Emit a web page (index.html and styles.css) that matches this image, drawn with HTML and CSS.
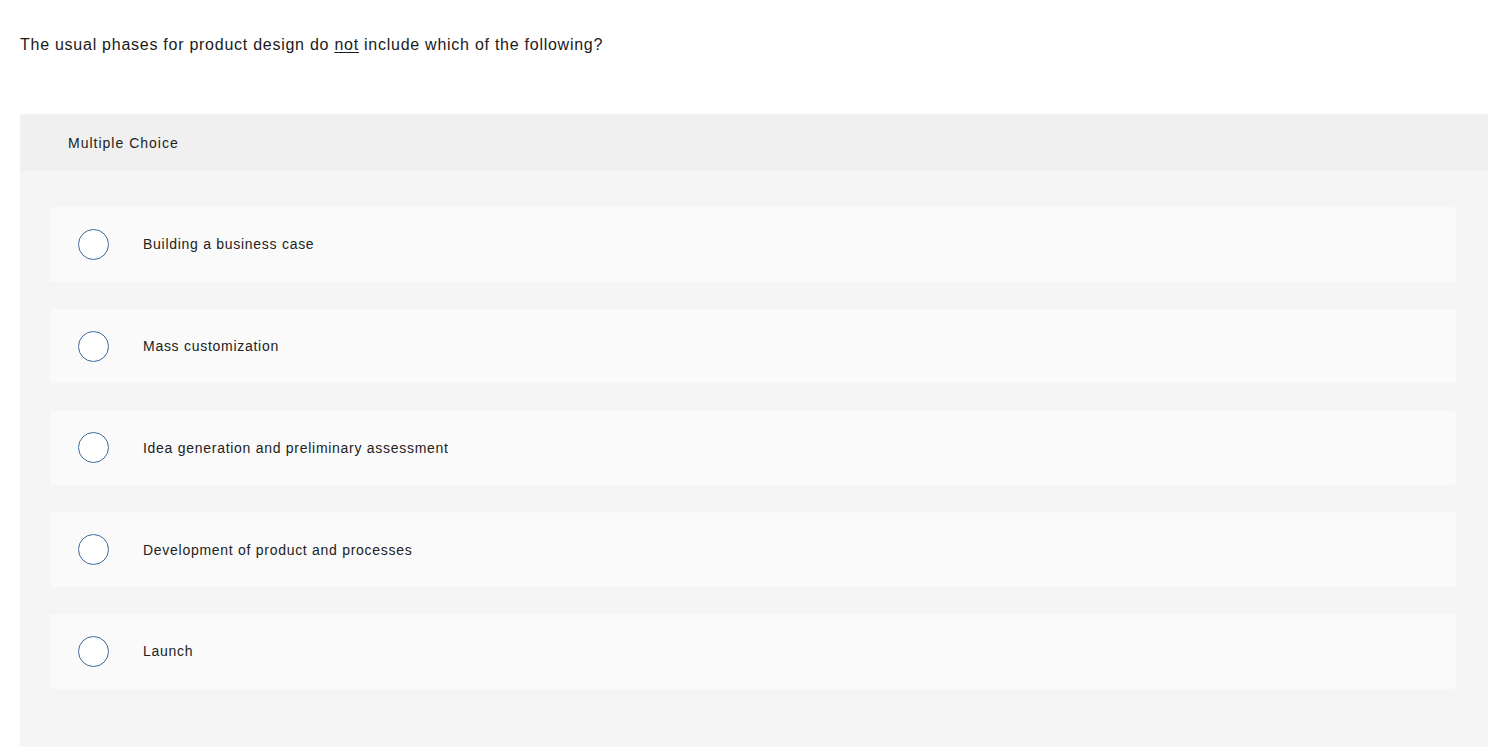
FILE: index.html
```html
<!DOCTYPE html>
<html>
<head>
<meta charset="utf-8">
<link rel="stylesheet" href="styles.css">
</head>
<body>
<p class="question">The usual phases for product design do <u>not</u> include which of the following?</p>
<div class="panel">
  <div class="panel-head">Multiple Choice</div>
  <div class="panel-body">
    <div class="option"><span class="radio"></span><span class="label">Building a business case</span></div>
    <div class="option"><span class="radio"></span><span class="label">Mass customization</span></div>
    <div class="option"><span class="radio"></span><span class="label">Idea generation and preliminary assessment</span></div>
    <div class="option"><span class="radio"></span><span class="label">Development of product and processes</span></div>
    <div class="option"><span class="radio"></span><span class="label">Launch</span></div>
  </div>
</div>
</body>
</html>
```

FILE: styles.css
```css
html, body {
  margin: 0;
  padding: 0;
  background: #ffffff;
  font-family: "Liberation Sans", Arial, sans-serif;
  color: #222;
}
body {
  padding: 0 13px 0 20px;
}
.question {
  margin: 0;
  padding-top: 35px;
  height: 80px;
  box-sizing: border-box;
  font-size: 16px;
  line-height: 20px;
  letter-spacing: 0.74px;
  color: #1a1a1a;
}
.question u {
  text-underline-offset: 2px;
}
.panel {
  margin-top: 34px;
  border-radius: 2px;
  overflow: hidden;
}
.panel-head {
  background: #f0f0f0;
  height: 57px;
  padding-left: 48px;
  display: flex;
  align-items: center;
  font-size: 14px;
  letter-spacing: 1px;
  color: #222;
}
.panel-body {
  background: #f5f5f5;
  padding: 36px 32px 58px 30px;
  display: flex;
  flex-direction: column;
  gap: 27.25px;
}
.option {
  background: #fafafa;
  border-radius: 3px;
  height: 74.5px;
  display: flex;
  align-items: center;
  padding-left: 28px;
}
.radio {
  width: 29px;
  height: 29px;
  border: 1px solid #3d6a9c;
  border-radius: 50%;
  background: #fff;
  flex: none;
}
.label {
  margin-left: 34px;
  font-size: 14px;
  letter-spacing: 0.72px;
  color: #222;
}
```
